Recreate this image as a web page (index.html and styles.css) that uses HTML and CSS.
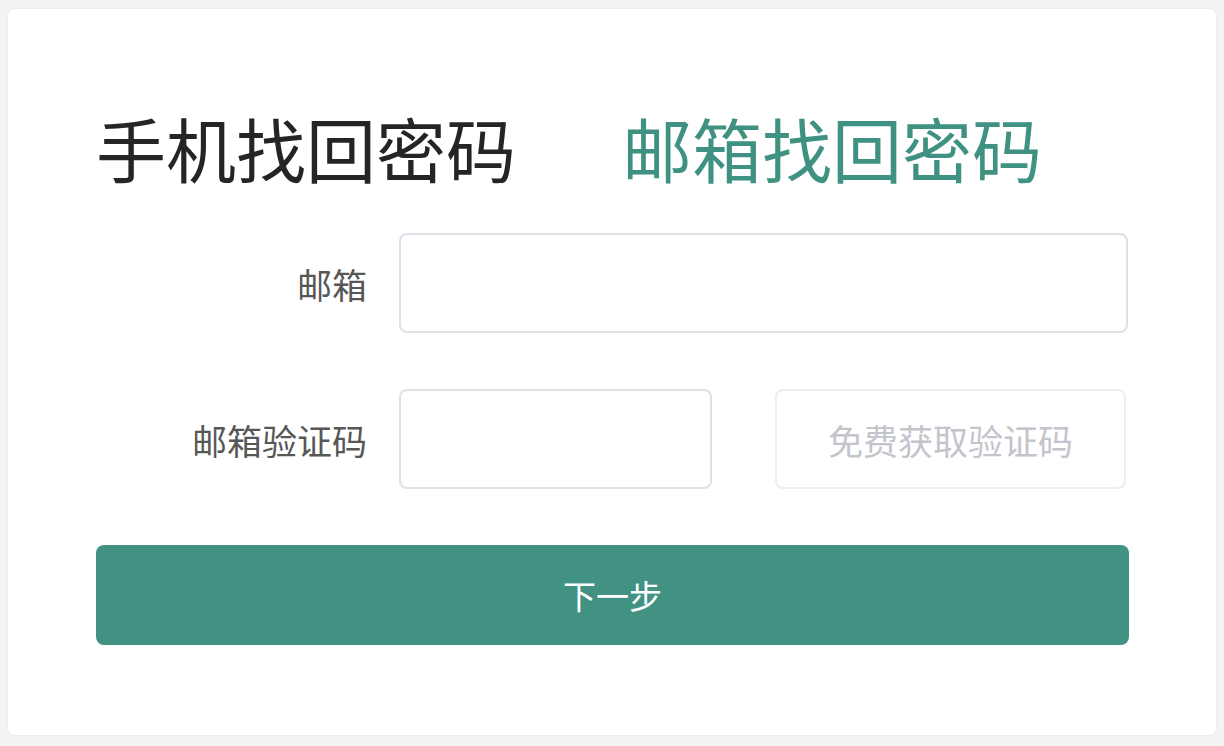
FILE: index.html
```html
<!DOCTYPE html>
<html lang="zh-CN">
<head>
    <meta charset="UTF-8">
    <meta name="viewport" content="width=device-width, initial-scale=1.0">
    <title>找回密码</title>
    <link rel="stylesheet" href="styles.css">
</head>
<body>

<div class="card">
    <div class="tabs">
        <span class="tab">手机找回密码</span>
        <span class="tab active">邮箱找回密码</span>
    </div>

    <form class="form">
        <div class="row">
            <label for="email" class="label">邮箱</label>
            <input type="text" id="email" class="input">
        </div>

        <div class="row">
            <label for="code" class="label">邮箱验证码</label>
            <div class="code-group">
                <input type="text" id="code" class="input code-input">
                <button type="button" class="code-btn" disabled>免费获取验证码</button>
            </div>
        </div>

        <button type="button" class="next-btn">下一步</button>
    </form>
</div>

</body>
</html>
```

FILE: styles.css
```css
body {
    margin: 0;
    background-color: #f3f3f6;
    font-family: "Noto Sans CJK SC", "Noto Sans", sans-serif;
}
.card {
    margin: 8px 7px 10px 7px;
    height: 728px;
    box-sizing: border-box;
    padding: 97px 88px 0 88px;
    background-color: #ffffff;
    border: 1px solid #ebebf0;
    border-radius: 8px;
}
.tabs {
    display: flex;
    gap: 106px;
    font-size: 70px;
    line-height: 84px;
    color: #252525;
}
.tab.active {
    color: #3f9181;
}
.form {
    margin-top: 43px;
}
.row {
    display: grid;
    grid-template-columns: 271px 1fr;
    column-gap: 32px;
    align-items: center;
    margin-bottom: 56px;
}
.label {
    text-align: right;
    font-size: 35px;
    color: #575757;
}
.input {
    height: 100px;
    box-sizing: border-box;
    border: 2px solid #dfe0e8;
    border-radius: 8px;
    font-size: 34px;
    padding: 0 20px;
    outline: none;
    width: 100%;
}
.code-group {
    display: flex;
    gap: 63px;
}
.code-input {
    width: 313px;
}
.code-btn {
    width: 351px;
    height: 100px;
    box-sizing: border-box;
    background-color: #ffffff;
    border: 2px solid #eceef4;
    border-radius: 8px;
    font-family: inherit;
    font-size: 35px;
    color: #c3c5cc;
}
.next-btn {
    display: block;
    width: 1033px;
    height: 100px;
    border: none;
    border-radius: 8px;
    background-color: #419283;
    color: #ffffff;
    font-family: inherit;
    font-size: 33px;
    cursor: pointer;
}
```
